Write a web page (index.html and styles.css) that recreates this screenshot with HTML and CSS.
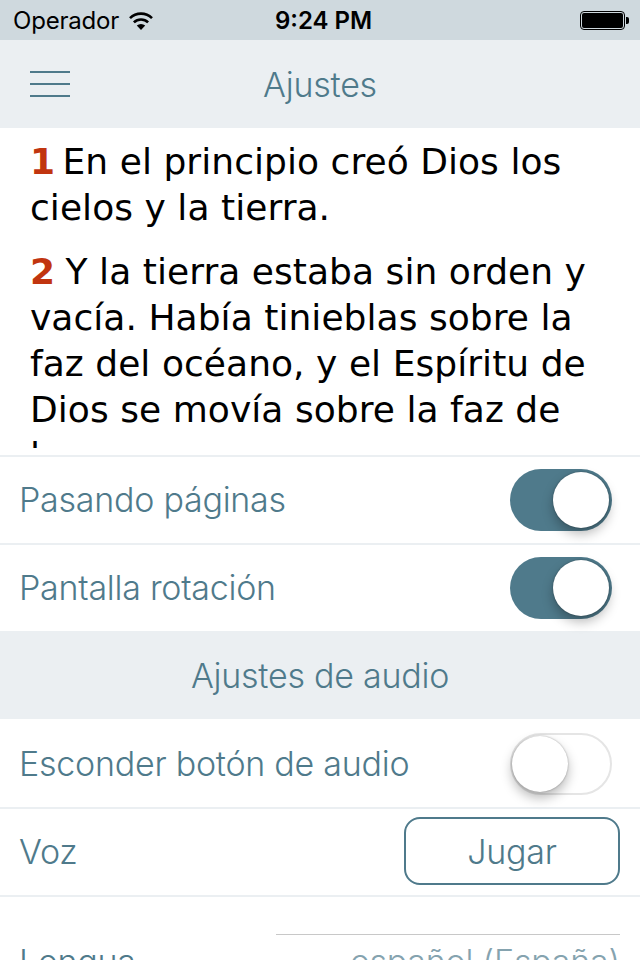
FILE: index.html

```html
<!DOCTYPE html>
<html lang="es">
<head>
  <meta charset="UTF-8">
  <meta name="viewport" content="width=device-width, initial-scale=1">
  <title>Ajustes</title>
  <link rel="stylesheet" href="styles.css">
</head>
<body>

  <div class="status-bar">
    <div class="status-left">
      <span class="carrier">Operador</span>
      <svg class="wifi" width="26" height="20" viewBox="0 0 26 20">
        <path d="M13 19 L8.8 14.6 A6 6 0 0 1 17.2 14.6 Z" fill="#000"/>
        <path d="M5.9 11.4 A10.2 10.2 0 0 1 20.1 11.4" fill="none" stroke="#000" stroke-width="2.6"/>
        <path d="M2 7.2 A15.6 15.6 0 0 1 24 7.2" fill="none" stroke="#000" stroke-width="2.6"/>
      </svg>
    </div>
    <div class="status-time">9:24 PM</div>
    <div class="status-right">
      <div class="battery"><div class="battery-fill"></div></div>
      <div class="battery-nub"></div>
    </div>
  </div>

  <div class="nav-bar">
    <div class="menu-btn">
      <span></span>
      <span></span>
      <span></span>
    </div>
    <div class="nav-title">Ajustes</div>
    <div></div>
  </div>

  <div class="preview">
    <div class="preview-clip">
      <p class="verse"><b>1</b> En el principio creó Dios los cielos y la tierra.</p>
      <p class="verse"><b>2</b> Y la tierra estaba sin orden y vacía. Había tinieblas sobre la faz del océano, y el Espíritu de Dios se movía sobre la faz de las aguas.</p>
    </div>
  </div>

  <div class="row">
    <span class="label">Pasando páginas</span>
    <div class="switch on"><div class="knob"></div></div>
  </div>
  <div class="row">
    <span class="label">Pantalla rotación</span>
    <div class="switch on"><div class="knob"></div></div>
  </div>

  <div class="section-head">Ajustes de audio</div>

  <div class="row">
    <span class="label">Esconder botón de audio</span>
    <div class="switch"><div class="knob"></div></div>
  </div>
  <div class="row">
    <span class="label">Voz</span>
    <button class="btn-play">Jugar</button>
  </div>
  <div class="row row-lang">
    <span class="label">Lengua</span>
    <div class="picker">español (España)</div>
  </div>

</body>
</html>
```

FILE: styles.css

```css
* {
  box-sizing: border-box;
}
html, body {
  height: 960px;
  overflow: hidden;
}
body {
  margin: 0;
  background: #fff;
  font-family: 'Inter', sans-serif;
  color: #4f7a8b;
}
.status-bar {
  height: 40px;
  background: #cfd9de;
  color: #000;
  display: grid;
  grid-template-columns: 1fr auto 1fr;
  align-items: center;
  padding: 1px 11px 0 13px;
  font-size: 24px;
}
.status-left {
  display: flex;
  align-items: center;
  gap: 9px;
}
.carrier {
  letter-spacing: -0.2px;
}
.status-time {
  font-weight: 600;
  margin-left: 5px;
}
.status-right {
  display: flex;
  align-items: center;
  justify-content: flex-end;
  margin-top: -1px;
}
.battery {
  width: 45px;
  height: 19px;
  border: 1px solid #000;
  border-radius: 4px;
  padding: 1px;
}
.battery-fill {
  height: 100%;
  background: #000;
  border-radius: 2px;
}
.battery-nub {
  width: 3px;
  height: 7px;
  margin-left: 1px;
  background: #000;
  border-radius: 0 2px 2px 0;
}
.nav-bar {
  height: 88px;
  background: #ebeff2;
  display: grid;
  grid-template-columns: 1fr auto 1fr;
  align-items: center;
  padding: 0 30px;
}
.menu-btn {
  width: 40px;
  display: flex;
  flex-direction: column;
  gap: 10px;
}
.menu-btn span {
  height: 2px;
  background: #4f7a8b;
}
.nav-title {
  font-size: 34px;
  font-weight: 350;
  letter-spacing: -0.25px;
}
.preview {
  height: 327px;
  padding-top: 11px;
}
.preview-clip {
  height: 309px;
  overflow: hidden;
  padding: 0 30px;
}
.verse {
  margin: 0 0 18px;
  font-family: 'DejaVu Sans', sans-serif;
  font-size: 36px;
  letter-spacing: 0.05px;
  line-height: 46px;
  color: #000;
}
.verse b {
  color: #c1350f;
  letter-spacing: -1px;
}
.verse:first-child b {
  letter-spacing: -4px;
}
.row {
  height: 88px;
  border-top: 2px solid #ebeff2;
  padding: 0 20px 0 19px;
  display: flex;
  align-items: center;
  justify-content: space-between;
}
.section-head + .row {
  border-top: none;
}
.label {
  font-size: 34px;
  font-weight: 350;
  letter-spacing: -0.25px;
  margin-bottom: 2px;
}
.section-head + .row .label {
  margin-bottom: 0;
}
.section-head + .row .switch {
  margin-top: 2px;
}
.section-head {
  height: 88px;
  background: #ebeff2;
  display: flex;
  align-items: center;
  justify-content: center;
  font-size: 34px;
  font-weight: 350;
  letter-spacing: -0.25px;
}
.switch {
  width: 102px;
  height: 62px;
  margin-right: 8px;
  border-radius: 31px;
  border: 2.5px solid #e5e5e5;
  background: #fff;
  display: flex;
  align-items: center;
  padding: 0;
}
.switch.on {
  border: none;
  background: #4f7a8b;
  justify-content: flex-end;
  padding-right: 3px;
}
.knob {
  width: 56px;
  height: 56px;
  border-radius: 50%;
  background: #fff;
  box-shadow: 0 0 2px rgba(0, 0, 0, 0.35), 0 6px 12px rgba(0, 0, 0, 0.28);
}
.btn-play {
  width: 216px;
  height: 68px;
  margin-bottom: 2px;
  border: 2px solid #4f7a8b;
  border-radius: 16px;
  background: #fff;
  color: #4f7a8b;
  font-family: 'Inter', sans-serif;
  font-size: 34px;
  font-weight: 350;
  letter-spacing: -0.25px;
}
.row-lang {
  align-items: flex-start;
  padding-top: 37px;
}
.row-lang .label {
  margin-top: 7px;
}
.picker {
  width: 344px;
  border-top: 1px solid #c8c8c8;
  padding-top: 6px;
  text-align: right;
  font-size: 34px;
  font-weight: 350;
  letter-spacing: -0.25px;
  color: #85a3af;
}
```
